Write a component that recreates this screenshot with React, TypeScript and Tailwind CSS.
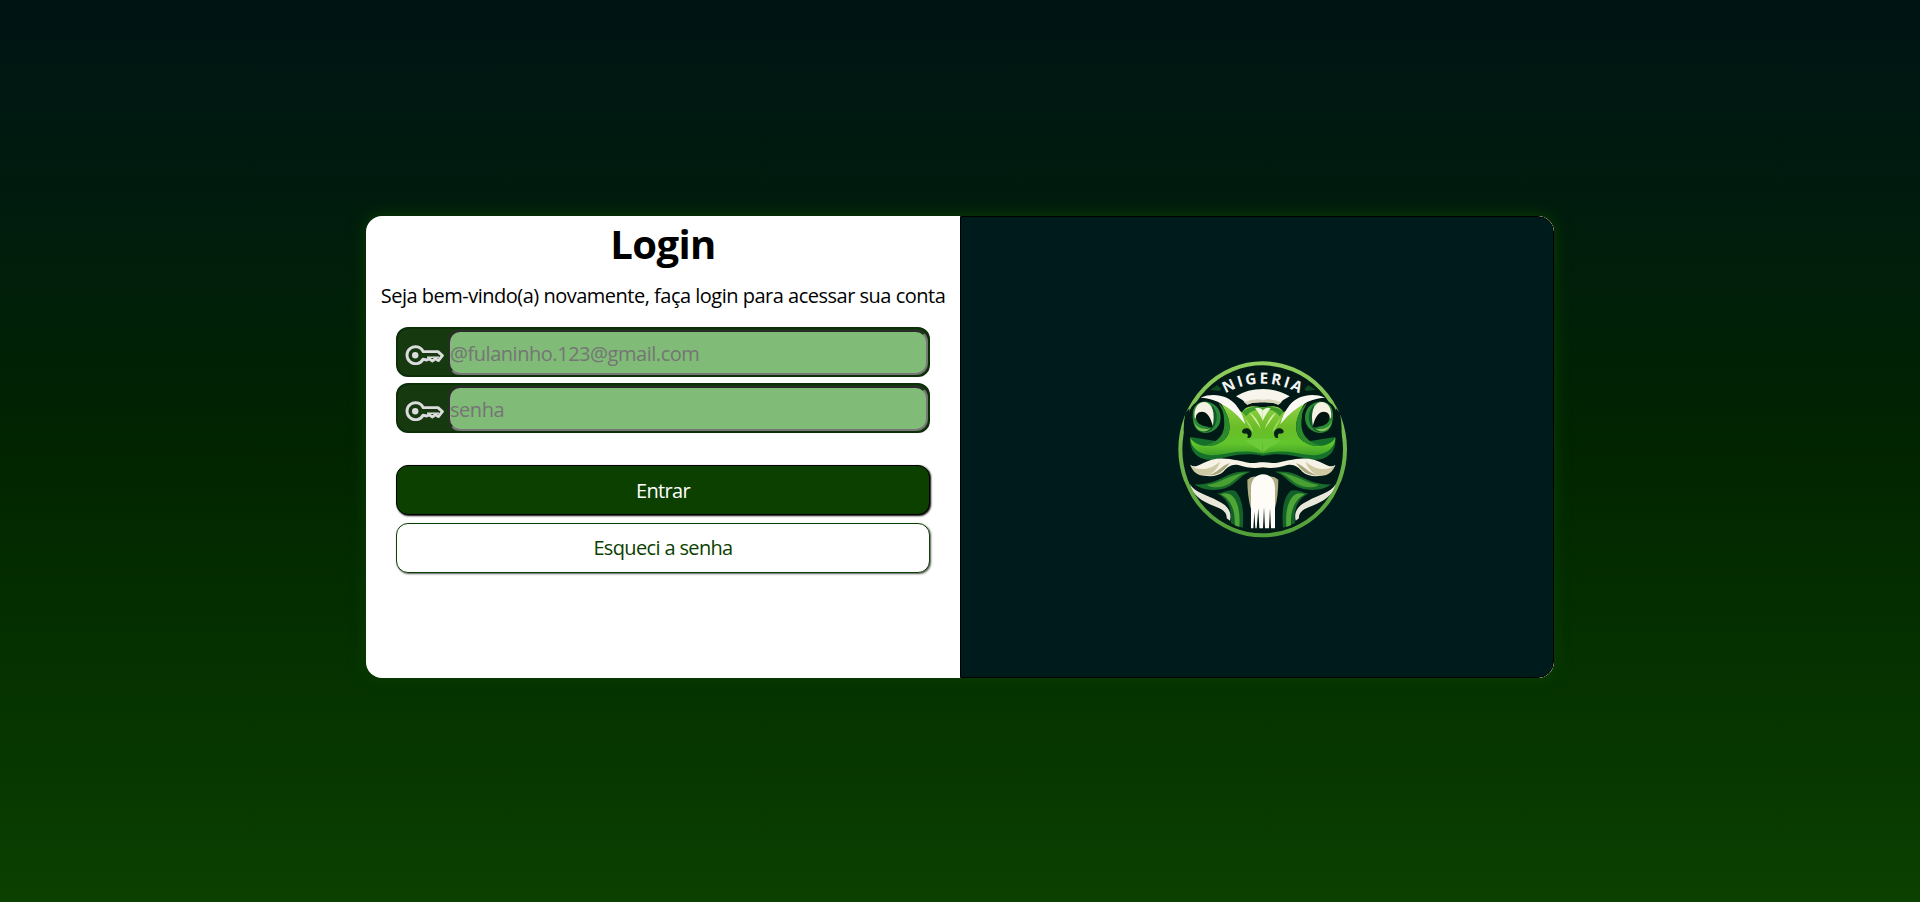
import React from "react";

function KeyIcon() {
  return (
    <svg viewBox="0 0 39 20" className="h-5 w-[39px] shrink-0" fill="none" stroke="#dcdcdc" strokeWidth="2.9" strokeLinejoin="round">
      <path d="M18.2 6.6H33L37.4 10.6L33.4 15.6L30.4 13.8L27.2 16L24.6 13.8L21.6 15L18 14.2A8.5 8.5 0 1 1 18.2 6.6Z" />
      <circle cx="10.2" cy="10.2" r="3.2" fill="#dcdcdc" stroke="none" />
      <path d="M22 12.2H34" strokeWidth="1.5" />
    </svg>
  );
}

function Field({ type, placeholder }: { type: string; placeholder: string }) {
  return (
    <label className="flex h-[50px] w-[534px] items-stretch rounded-xl border-2 border-[#0c2f07] bg-[#16390f] pl-[7px]">
      <span className="flex w-[43px] items-center pt-1.5">
        <KeyIcon />
      </span>
      <input
        type={type}
        placeholder={placeholder}
        className="mt-px min-w-0 flex-1 rounded-xl border-2 border-t-[#2b2b2b] border-l-[#2b2b2b] border-r-[#767676] border-b-[#767676] bg-[#80bb77] pt-0.5 text-[20px] tracking-[-0.46px] text-black outline-none placeholder:text-[#757575]"
      />
    </label>
  );
}

function FrogHalf() {
  return (
    <g>
      <path d="M150 134L172 120L184 132L178 138Z" fill="#124a22" />
      {/* crown */}
      <path d="M228 154Q262 132 309 132V172Q280 171 262 179Q248 163 228 154Z" fill="#f7f5ec" />
      <path d="M252 172Q278 160 309 164V172Q280 171 262 179Z" fill="#d9d5bb" />
      {/* cheek and snout */}
      <path d="M91 276C86 320 115 348 160 344C205 338 240 320 309 332V300L180 290Z" fill="#15702b" />
      <path d="M91 278C92 312 125 334 170 330C215 324 250 312 309 326V187L280 184C265 184 252 190 247 202L225 190L175 162C196 195 212 225 208 256C202 290 165 308 130 302C110 298 98 290 91 278Z" fill="url(#skin)" />
      <path d="M208 256C202 290 165 308 130 302C165 296 188 276 192 248C196 220 186 196 175 172C200 196 212 225 208 256Z" fill="#2b8a2b" />
      <path d="M250 288C265 292 285 305 309 322V282C290 276 275 285 250 288Z" fill="#6dcb3a" />
      <path d="M247 202Q265 180 309 187L309 195Q275 190 258 214Z" fill="#3f9c2a" />
      <path d="M285 190Q299 184 309 196V228Q297 203 285 190Z" fill="#eef6d8" />
      <path d="M268 202Q290 215 303 252Q283 224 268 202Z" fill="#d3efa0" />
      <path d="M252 216Q272 236 281 262Q264 244 252 216Z" fill="#a5da62" />
      {/* brow */}
      <path d="M122 158C160 142 205 152 228 180C242 198 250 215 256 238C236 214 218 196 190 180C170 166 150 160 122 158Z" fill="#f9f8f2" />
      {/* eye */}
      <circle cx="138" cy="216" r="53" fill="#011a17" />
      <path d="M98 210C98 180 118 168 142 170C172 176 188 202 180 232C172 260 138 272 116 258C102 248 98 230 98 210Z" fill="#2a8a35" />
      <path d="M155 180C176 200 176 234 154 254C142 264 124 262 116 256C134 258 150 246 158 232Z" fill="#12592a" />
      <path d="M100 226C108 250 130 256 152 250C138 266 108 264 100 226Z" fill="#7cc454" />
      <path d="M104 218C100 190 114 170 134 171C158 174 166 206 158 244Z" fill="#f5f2e4" />
      <path d="M108 220C106 206 120 196 134 202C150 212 154 228 159 245C138 248 112 242 108 220Z" fill="#021410" />
      {/* nostril */}
      <path d="M247 256C254 244 275 250 275 266C275 276 268 282 262 278C266 270 262 264 254 266C248 266 244 262 247 256Z" fill="#022314" />
      {/* moustache */}
      <path d="M91 360C110 372 125 352 155 344C200 334 240 350 270 354C285 355 298 351 309 352V367C288 370 262 370 235 360C215 356 202 366 190 380C165 402 110 398 91 360Z" fill="#f6f3e6" />
      <path d="M91 360C115 382 155 372 180 350C176 366 162 384 142 391C118 396 98 382 91 360Z" fill="#cfc9a4" />
      <path d="M142 391C172 386 182 362 210 354C196 368 184 394 142 391Z" fill="#aaa67c" />
      {/* lower jaw */}
      <path d="M104 418C145 420 175 405 205 390C225 380 250 378 272 380C240 390 232 416 195 430C160 440 122 434 104 418Z" fill="#176b2b" />
      <path d="M140 420C180 416 205 390 260 382C230 392 222 414 190 424C170 430 150 426 140 420Z" fill="#4a9f33" />
      {/* throat */}
      <path d="M172 446C200 438 214 432 226 438C248 460 252 500 248 548L212 535C216 500 208 462 172 446Z" fill="#12602a" />
      <path d="M182 448C202 440 216 446 226 464C238 486 240 515 238 546L224 541C226 505 218 466 182 448Z" fill="#4fa535" />
      {/* side stripe */}
      <path d="M90 418C106 444 142 450 174 468C204 482 216 500 210 527L200 520C202 500 182 490 160 482C126 470 98 450 90 418Z" fill="#e9e7d9" />
      <path d="M262 404Q278 390 292 396V490H272Q262 450 262 404Z" fill="#aead83" />
    </g>
  );
}

function Logo() {
  return (
    <svg viewBox="-9 6 600 600" className="size-[200px]">
      <defs>
        <linearGradient id="skin" x1="0" y1="0" x2="0" y2="1">
          <stop offset="0" stopColor="#9bd651" />
          <stop offset="0.5" stopColor="#6bbd27" />
          <stop offset="0.8" stopColor="#62c52c" />
          <stop offset="1" stopColor="#3fa026" />
        </linearGradient>
        <linearGradient id="ring" x1="0" y1="0" x2="0" y2="1">
          <stop offset="0" stopColor="#8fce5c" />
          <stop offset="1" stopColor="#529f3a" />
        </linearGradient>
        <path id="arc" d="M174 160A222 222 0 0 1 440 160" />
      </defs>
      <ellipse cx="308" cy="313" rx="247" ry="258" fill="#011a17" stroke="url(#ring)" strokeWidth="12" />
      <path d="M76 205Q66 255 76 300L88 250V190ZM540 205Q550 255 540 300L528 250V190Z" fill="#011a17" />
      <path d="M73 410L94 456L82 452L64 410ZM543 410L522 456L534 452L552 410Z" fill="#011a17" />
      <FrogHalf />
      <g transform="matrix(-1 0 0 1 617 0)">
        <FrogHalf />
      </g>
      {/* chin tuft */}
      <path d="M273 550V430C273 402 290 388 309 388C328 388 345 402 345 430V550H333L330 490L327 550H315L312 486L309 550H298L295 490L290 550H286L283 500L280 550Z" fill="#fdfcf6" />
      <text fill="#f3f5f5" fontFamily="Open Sans, sans-serif" fontWeight="700" fontSize="46">
        <textPath href="#arc" startOffset="50%" textAnchor="middle" textLength="232">
          NIGERIA
        </textPath>
      </text>
    </svg>
  );
}

export default function App() {
  return (
    <main className="flex h-[902px] items-center justify-center bg-linear-to-b from-[#001414] via-[#022500] to-[#0b4000] pb-2 font-['Open_Sans','Noto_Sans',sans-serif] text-black">
      <section className="flex h-[462px] w-[1188px] overflow-hidden rounded-2xl bg-white shadow-[0_0_16px_#0b4000]">
        <div className="flex w-1/2 flex-col items-center">
          <h1 className="mt-[3px] text-[40px] leading-[50px] font-bold tracking-[-0.6px]">Login</h1>
          <p className="mt-[13px] text-[20px] leading-7 tracking-[-0.5px] whitespace-nowrap">Seja bem-vindo(a) novamente, faça login para acessar sua conta</p>
          <div className="mt-[17px] flex flex-col gap-1.5">
            <Field type="email" placeholder="@fulaninho.123@gmail.com" />
            <Field type="password" placeholder="senha" />
          </div>
          <div className="mt-8 flex flex-col gap-2">
            <button className="h-[50px] w-[534px] rounded-xl border border-black bg-[#0b4000] pt-0.5 text-[20px] tracking-[-0.7px] text-white shadow-[1px_1px_2px_#000]">Entrar</button>
            <button className="h-[50px] w-[534px] rounded-xl border border-[#0b4000] bg-white text-[20px] tracking-[-0.65px] text-[#0b4000] shadow-[1px_1px_2px_#555]">Esqueci a senha</button>
          </div>
        </div>
        <div className="flex w-1/2 items-center justify-center rounded-r-2xl border border-black bg-[#001b1b]">
          <Logo />
        </div>
      </section>
    </main>
  );
}
